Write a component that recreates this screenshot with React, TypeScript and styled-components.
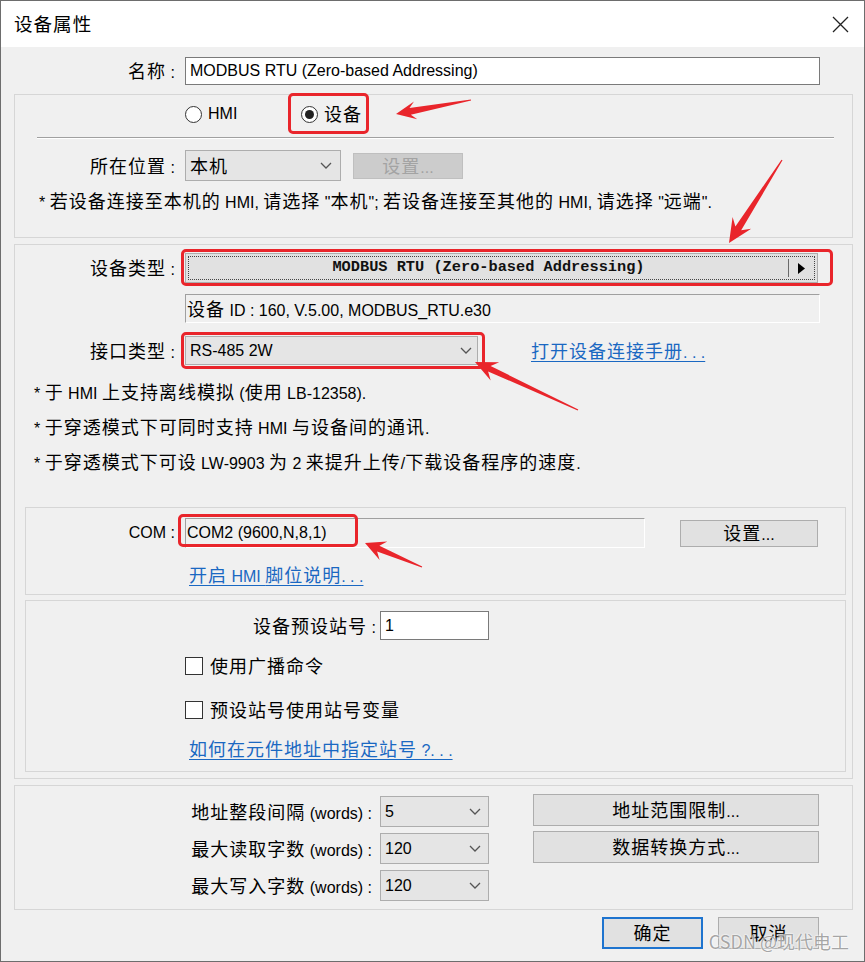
import React from "react";
import styled, { createGlobalStyle } from "styled-components";

const RED = "#e9252b";
const LINK = "#1a68c2";

const GlobalStyle = createGlobalStyle`
  html, body { margin: 0; padding: 0; background: #ffffff; }
  body {
    font-family: "Liberation Sans", "Noto Sans CJK SC", sans-serif;
    font-size: 16px;
    line-height: 1.25;
    color: #000;
  }
  * { box-sizing: border-box; }
`;

const Cjk = styled.span`
  font-family: "Noto Sans CJK SC", sans-serif;
  font-size: 1.125em;
  letter-spacing: 1px;
`;

const CJK_RE = /([\u2E80-\u9FFF\uF900-\uFAFF\uFF00-\uFFEF\u3000-\u303F]+)/;

const T = ({ children }: { children: string }) => (
  <span>
    {children
      .split(CJK_RE)
      .filter(Boolean)
      .map((part, i) =>
        CJK_RE.test(part) ? <Cjk key={i}>{part}</Cjk> : <React.Fragment key={i}>{part}</React.Fragment>
      )}
  </span>
);

const Window = styled.div`
  position: relative;
  width: 865px;
  height: 962px;
  border: 1px solid #6d6d6d;
  background: #f0f0f0;
  display: flex;
  flex-direction: column;
  overflow: hidden;
`;

const TitleBar = styled.div`
  flex: none;
  height: 46px;
  background: #ffffff;
  display: flex;
  align-items: center;
  justify-content: space-between;
  padding: 0 15px 0 13px;
`;

const Title = styled.span`
  font-size: 16.5px;
  line-height: 1;
`;

const Body = styled.div`
  display: flex;
  flex-direction: column;
  padding: 10px 11px 0 13px;
`;

const FieldRow = styled.div<{ $h: number; $mt?: number; $pl?: number }>`
  display: flex;
  align-items: center;
  height: ${(p) => p.$h}px;
  margin-top: ${(p) => p.$mt ?? 0}px;
  padding-left: ${(p) => p.$pl ?? 0}px;
  flex: none;
`;

const Label = styled.span<{ $w: number; $gap?: number }>`
  flex: none;
  width: ${(p) => p.$w}px;
  margin-right: ${(p) => p.$gap ?? 10}px;
  text-align: right;
  white-space: nowrap;
`;

const TextBox = styled.div<{ $w: number; $h: number }>`
  flex: none;
  width: ${(p) => p.$w}px;
  height: ${(p) => p.$h}px;
  background: #ffffff;
  border: 1px solid #7a7a7a;
  display: flex;
  align-items: center;
  padding-left: 4px;
  white-space: nowrap;
`;

const SunkenBox = styled.div<{ $w: number; $h: number }>`
  flex: none;
  width: ${(p) => p.$w}px;
  height: ${(p) => p.$h}px;
  background: #f0f0f0;
  border-top: 1px solid #a0a0a0;
  border-left: 1px solid #a0a0a0;
  border-right: 1px solid #ffffff;
  border-bottom: 1px solid #ffffff;
  display: flex;
  align-items: center;
  padding-left: 1px;
  white-space: nowrap;
`;

const Combo = styled.div<{ $w: number; $h: number; $pr?: number }>`
  flex: none;
  width: ${(p) => p.$w}px;
  height: ${(p) => p.$h}px;
  background: #e5e5e5;
  border: 1px solid #adadad;
  display: flex;
  align-items: center;
  justify-content: space-between;
  padding: 0 ${(p) => p.$pr ?? 8}px 0 4px;
  white-space: nowrap;
`;

const Button = styled.div<{ $w: number; $h: number; $disabled?: boolean; $default?: boolean; $ml?: number }>`
  flex: none;
  width: ${(p) => p.$w}px;
  height: ${(p) => p.$h}px;
  margin-left: ${(p) => p.$ml ?? 0}px;
  background: ${(p) => (p.$disabled ? "#cccccc" : "#e1e1e1")};
  border: ${(p) => (p.$default ? "2px solid #1e74cf" : p.$disabled ? "1px solid #bfbfbf" : "1px solid #adadad")};
  color: ${(p) => (p.$disabled ? "#a3a3a3" : "#000")};
  display: flex;
  align-items: center;
  justify-content: center;
  white-space: nowrap;
`;

const Group = styled.div<{ $mt: number; $pb?: number }>`
  flex: none;
  display: flex;
  flex-direction: column;
  border: 1px solid #d6d6d6;
  margin-top: ${(p) => p.$mt}px;
  padding-bottom: ${(p) => p.$pb ?? 0}px;
`;

const RadioRow = styled.div`
  display: grid;
  grid-template-columns: 116px auto;
  justify-items: start;
  align-items: center;
  height: 34px;
  margin-top: 2px;
  padding-left: 170px;
`;

const RadioItem = styled.span`
  display: inline-flex;
  align-items: center;
  gap: 6px;
  line-height: 24px;
`;

const RadioCircle = styled.span<{ $on?: boolean }>`
  position: relative;
  width: 17px;
  height: 17px;
  border-radius: 50%;
  border: 1px solid #333;
  background: #fff;
  flex: none;
  &::after {
    content: "";
    display: ${(p) => (p.$on ? "block" : "none")};
    position: absolute;
    left: 3px;
    top: 3px;
    width: 9px;
    height: 9px;
    border-radius: 50%;
    background: #222;
  }
`;

const Highlight = styled.span<{ $t: number; $r: number; $b: number; $l: number }>`
  position: relative;
  display: inline-flex;
  align-items: center;
  &::after {
    content: "";
    position: absolute;
    top: -${(p) => p.$t}px;
    right: -${(p) => p.$r}px;
    bottom: -${(p) => p.$b}px;
    left: -${(p) => p.$l}px;
    border: 3px solid ${RED};
    border-radius: 5px;
    pointer-events: none;
  }
`;

const Separator = styled.div`
  height: 2px;
  border-top: 1px solid #a0a0a0;
  border-bottom: 1px solid #ffffff;
  margin: 6px 18px 0 22px;
`;

const Note = styled.div<{ $h: number; $mt?: number; $pl: number }>`
  height: ${(p) => p.$h}px;
  margin-top: ${(p) => p.$mt ?? 0}px;
  padding-left: ${(p) => p.$pl}px;
  display: flex;
  align-items: center;
  white-space: pre;
`;

const Link = styled.span<{ $ml?: number }>`
  color: ${LINK};
  text-decoration: underline;
  text-underline-offset: 3px;
  margin-left: ${(p) => p.$ml ?? 0}px;
  white-space: pre;
`;

const DeviceButton = styled.div`
  flex: none;
  width: 633px;
  height: 30px;
  background: #e1e1e1;
  border: 1px solid #adadad;
  padding: 2px;
  display: flex;
`;

const FocusRect = styled.div`
  flex: 1;
  display: flex;
  border: 1px dotted #444;
`;

const DeviceText = styled.div`
  flex: 1;
  display: flex;
  align-items: center;
  justify-content: center;
  font-family: "Liberation Mono", "DejaVu Sans Mono", monospace;
  font-size: 15.3px;
  font-weight: bold;
  color: #111;
  white-space: pre;
`;

const ArrowPart = styled.div`
  width: 26px;
  flex: none;
  display: flex;
  align-items: center;
  justify-content: center;
  border-left: 1px solid #6a6a6a;
  margin: 2px 0;
`;

const Inset = styled.div<{ $mt: number; $pb: number; $mb?: number }>`
  flex: none;
  display: flex;
  flex-direction: column;
  border: 1px solid #d6d6d6;
  margin: ${(p) => p.$mt}px 6px ${(p) => p.$mb ?? 0}px 10px;
  padding-bottom: ${(p) => p.$pb}px;
`;

const CheckRow = styled.div<{ $mt: number }>`
  display: flex;
  align-items: center;
  gap: 7px;
  height: 24px;
  margin-top: ${(p) => p.$mt}px;
  padding-left: 159px;
`;

const CheckBox = styled.span`
  width: 18px;
  height: 18px;
  border: 1px solid #333;
  background: #fff;
  flex: none;
`;

const LimitsArea = styled.div`
  display: flex;
  align-items: flex-start;
  padding: 8px 0 8px 0;
`;

const LimitFields = styled.div`
  display: flex;
  flex-direction: column;
  gap: 6px;
  margin-top: 2px;
`;

const LimitButtons = styled.div`
  display: flex;
  flex-direction: column;
  gap: 5px;
  margin-left: 44px;
`;

const Footer = styled.div`
  display: flex;
  justify-content: flex-end;
  gap: 15px;
  margin-top: 7px;
  padding-right: 34px;
`;

const Watermark = styled.div`
  position: absolute;
  right: 15px;
  bottom: 9px;
  font-family: "Noto Sans CJK SC", sans-serif;
  font-size: 18px;
  color: rgba(150, 150, 150, 0.85);
  text-shadow: 0 0 2px #fff, 0 0 2px #fff;
  white-space: nowrap;
  pointer-events: none;
`;

const Overlay = styled.svg`
  position: absolute;
  left: -1px;
  top: -1px;
  pointer-events: none;
`;

const Chevron = () => (
  <svg width="12" height="7" viewBox="0 0 12 7">
    <polyline points="1,1 6,6 11,1" fill="none" stroke="#555" strokeWidth="1.3" />
  </svg>
);

const CloseIcon = () => (
  <svg width="17" height="17" viewBox="0 0 17 17">
    <path d="M1 1 L16 16 M16 1 L1 16" stroke="#222" strokeWidth="1.3" />
  </svg>
);

const RightTri = () => (
  <svg width="7" height="11" viewBox="0 0 7 11">
    <polygon points="0,0 7,5.5 0,11" fill="#000" />
  </svg>
);

type P = [number, number];
function arrowPoints(tail: P, tip: P, headLen: number, headW: number, neckW: number, tailW: number) {
  const dx = tip[0] - tail[0];
  const dy = tip[1] - tail[1];
  const len = Math.hypot(dx, dy);
  const ux = dx / len;
  const uy = dy / len;
  const nx = -uy;
  const ny = ux;
  const base: P = [tip[0] - ux * headLen, tip[1] - uy * headLen];
  const neck: P = [tip[0] - ux * headLen * 0.72, tip[1] - uy * headLen * 0.72];
  const pts: P[] = [
    [tail[0] + (nx * tailW) / 2, tail[1] + (ny * tailW) / 2],
    [neck[0] + (nx * neckW) / 2, neck[1] + (ny * neckW) / 2],
    [base[0] + nx * headW, base[1] + ny * headW],
    tip,
    [base[0] - nx * headW, base[1] - ny * headW],
    [neck[0] - (nx * neckW) / 2, neck[1] - (ny * neckW) / 2],
    [tail[0] - (nx * tailW) / 2, tail[1] - (ny * tailW) / 2],
  ];
  return pts.map((p) => `${p[0].toFixed(1)},${p[1].toFixed(1)}`).join(" ");
}

const arrows: { tail: P; tip: P; hl: number; hw: number; nw: number }[] = [
  { tail: [471, 100], tip: [396, 114], hl: 20, hw: 9, nw: 7 },
  { tail: [782, 160], tip: [729, 243], hl: 24, hw: 11, nw: 7 },
  { tail: [578, 410], tip: [475, 362], hl: 22, hw: 10, nw: 6 },
  { tail: [422, 567], tip: [365, 543], hl: 20, hw: 10, nw: 6 },
];

const limits: [string, string][] = [
  ["地址整段间隔", "5"],
  ["最大读取字数", "120"],
  ["最大写入字数", "120"],
];

export default function App() {
  return (
    <>
      <GlobalStyle />
      <Window>
        <TitleBar>
          <Title>
            <T>设备属性</T>
          </Title>
          <CloseIcon />
        </TitleBar>
        <Body>
          <FieldRow $h={28}>
            <Label $w={161}>
              <T>名称 :</T>
            </Label>
            <TextBox $w={635} $h={28}>MODBUS RTU (Zero-based Addressing)</TextBox>
          </FieldRow>

          <Group $mt={9} $pb={24}>
            <RadioRow>
              <RadioItem>
                <RadioCircle />
                HMI
              </RadioItem>
              <Highlight $t={8} $r={7} $b={6} $l={13}>
                <RadioItem>
                  <RadioCircle $on />
                  <T>设备</T>
                </RadioItem>
              </Highlight>
            </RadioRow>
            <Separator />
            <FieldRow $h={31} $mt={11}>
              <Label $w={160}>
                <T>所在位置 :</T>
              </Label>
              <Combo $w={156} $h={31} $pr={8}>
                <T>本机</T>
                <Chevron />
              </Combo>
              <Button $w={110} $h={26} $disabled $ml={12}>
                <T>设置...</T>
              </Button>
            </FieldRow>
            <Note $h={24} $mt={8} $pl={24}>
              <T>{'* 若设备连接至本机的 HMI, 请选择 "本机"; 若设备连接至其他的 HMI, 请选择 "远端".'}</T>
            </Note>
          </Group>

          <Group $mt={6}>
            <FieldRow $h={30} $mt={8}>
              <Label $w={160}>
                <T>设备类型 :</T>
              </Label>
              <Highlight $t={4} $r={15} $b={3} $l={4}>
                <DeviceButton>
                  <FocusRect>
                    <DeviceText>MODBUS RTU (Zero-based Addressing)</DeviceText>
                    <ArrowPart>
                      <RightTri />
                    </ArrowPart>
                  </FocusRect>
                </DeviceButton>
              </Highlight>
            </FieldRow>
            <FieldRow $h={29} $mt={11}>
              <Label $w={160} />
              <SunkenBox $w={635} $h={29}>
                <T>设备 ID : 160, V.5.00, MODBUS_RTU.e30</T>
              </SunkenBox>
            </FieldRow>
            <FieldRow $h={29} $mt={13}>
              <Label $w={160}>
                <T>接口类型 :</T>
              </Label>
              <Highlight $t={4} $r={7} $b={4} $l={4}>
                <Combo $w={293} $h={29} $pr={5}>
                  <span>RS-485 2W</span>
                  <Chevron />
                </Combo>
              </Highlight>
              <Link $ml={53}>
                <T>打开设备连接手册. . .</T>
              </Link>
            </FieldRow>
            <Note $h={35} $mt={9} $pl={19}>
              <T>* 于 HMI 上支持离线模拟 (使用 LB-12358).</T>
            </Note>
            <Note $h={35} $pl={19}>
              <T>* 于穿透模式下可同时支持 HMI 与设备间的通讯.</T>
            </Note>
            <Note $h={35} $pl={19}>
              <T>* 于穿透模式下可设 LW-9903 为 2 来提升上传/下载设备程序的速度.</T>
            </Note>

            <Inset $mt={28} $pb={7}>
              <FieldRow $h={30} $mt={10}>
                <Label $w={149}>COM :</Label>
                <SunkenBox $w={460} $h={30}>
                  <Highlight $t={9} $r={31} $b={4} $l={9}>
                    <span>COM2 (9600,N,8,1)</span>
                  </Highlight>
                </SunkenBox>
                <Button $w={138} $h={27} $ml={35}>
                  <T>设置...</T>
                </Button>
              </FieldRow>
              <FieldRow $h={24} $mt={15} $pl={163}>
                <Link>
                  <T>开启 HMI 脚位说明. . .</T>
                </Link>
              </FieldRow>
            </Inset>

            <Inset $mt={5} $pb={10} $mb={6}>
              <FieldRow $h={29} $mt={10}>
                <Label $w={350} $gap={4}>
                  <T>设备预设站号 :</T>
                </Label>
                <TextBox $w={109} $h={29}>1</TextBox>
              </FieldRow>
              <CheckRow $mt={14}>
                <CheckBox />
                <T>使用广播命令</T>
              </CheckRow>
              <CheckRow $mt={20}>
                <CheckBox />
                <T>预设站号使用站号变量</T>
              </CheckRow>
              <FieldRow $h={24} $mt={15} $pl={163}>
                <Link>
                  <T>如何在元件地址中指定站号 ?. . .</T>
                </Link>
              </FieldRow>
            </Inset>
          </Group>

          <Group $mt={6}>
            <LimitsArea>
              <LimitFields>
                {limits.map(([label, value]) => (
                  <FieldRow $h={31} key={label}>
                    <Label $w={357} $gap={8}>
                      <T>{`${label} (words) :`}</T>
                    </Label>
                    <Combo $w={109} $h={31} $pr={7}>
                      <span>{value}</span>
                      <Chevron />
                    </Combo>
                  </FieldRow>
                ))}
              </LimitFields>
              <LimitButtons>
                <Button $w={286} $h={32}>
                  <T>地址范围限制...</T>
                </Button>
                <Button $w={286} $h={32}>
                  <T>数据转换方式...</T>
                </Button>
              </LimitButtons>
            </LimitsArea>
          </Group>

          <Footer>
            <Button $w={101} $h={32} $default>
              <T>确定</T>
            </Button>
            <Button $w={101} $h={32}>
              <T>取消</T>
            </Button>
          </Footer>
        </Body>

        <Overlay width="865" height="962" viewBox="0 0 865 962">
          {arrows.map((a, i) => (
            <polygon key={i} points={arrowPoints(a.tail, a.tip, a.hl, a.hw, a.nw, 1.2)} fill={RED} />
          ))}
        </Overlay>
        <Watermark>CSDN @现代电工</Watermark>
      </Window>
    </>
  );
}
